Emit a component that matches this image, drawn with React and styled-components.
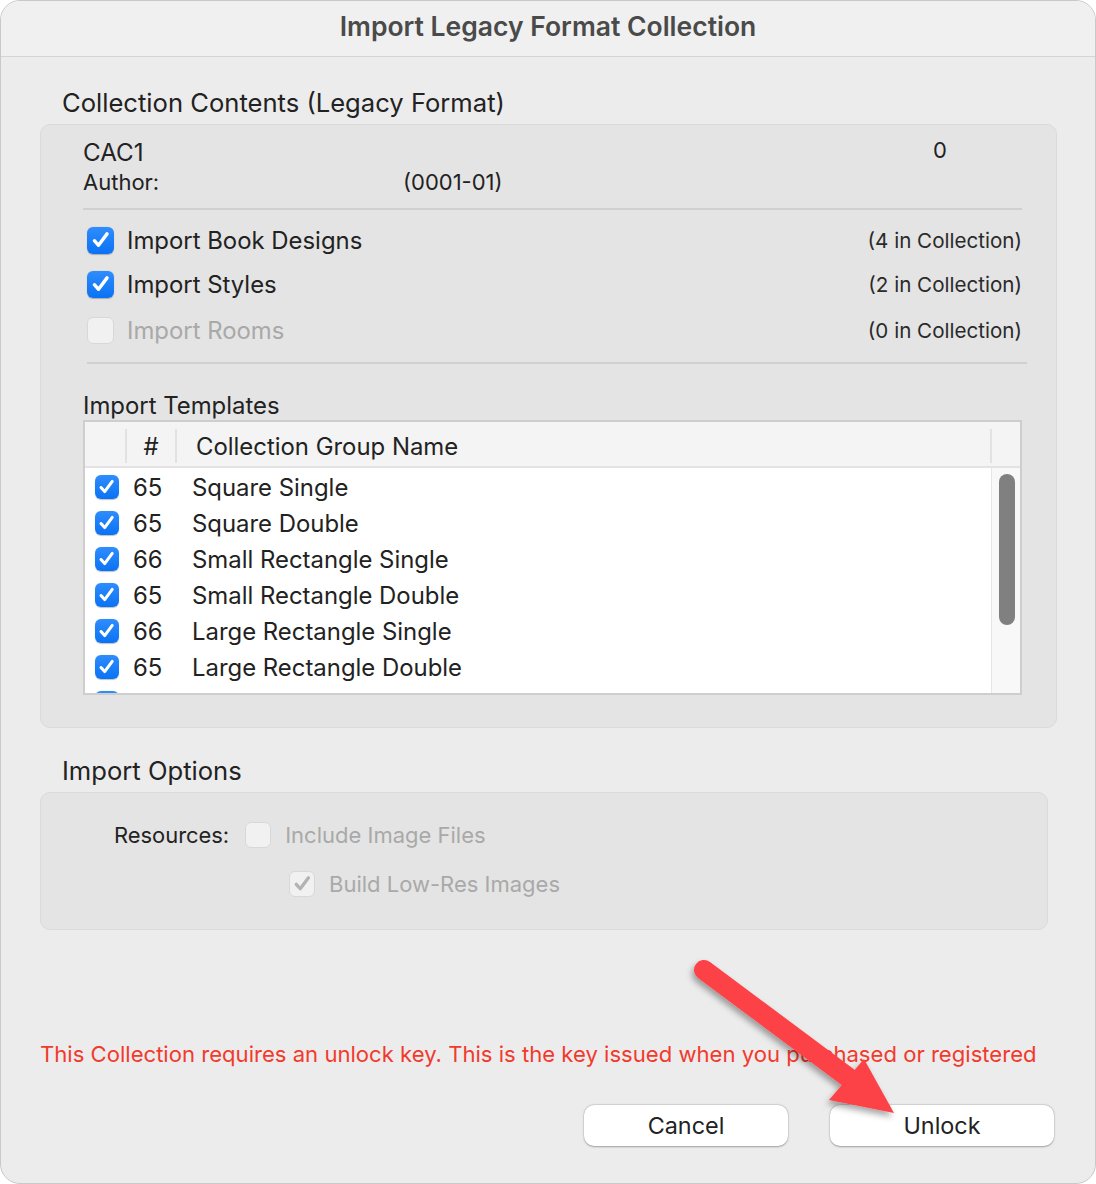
import React from "react";
import styled, { createGlobalStyle } from "styled-components";

const Global = createGlobalStyle`
  html, body { margin: 0; padding: 0; background: #ffffff; }
  body { font-family: Inter, "Noto Sans", sans-serif; -webkit-font-smoothing: antialiased; }
`;

const Window = styled.div`
  position: relative;
  width: 1096px;
  height: 1184px;
  box-sizing: border-box;
  border-radius: 20px;
  overflow: hidden;
  background: #ececec;
  border: 1px solid #c9c9c9;
  display: flex;
  flex-direction: column;
  color: #222;
`;

const TitleBar = styled.div`
  height: 56px;
  box-sizing: border-box;
  padding-bottom: 5px;
  flex: none;
  background: #f0f0f0;
  border-bottom: 1px solid #d4d4d4;
  display: flex;
  align-items: center;
  justify-content: center;
  font-size: 26.5px;
  font-weight: 600;
  color: #4a4a4a;
`;

const Body = styled.div`
  flex: 1;
  display: flex;
  flex-direction: column;
  padding: 0 40px 0 39px;
`;

const SectionLabel = styled.div`
  font-size: 25.6px;
  line-height: 30px;
  margin: ${(p) => p.$mt}px 0 6px 22px;
  color: #222;
`;

const Box = styled.div`
  box-sizing: border-box;
  width: ${(p) => p.$w}px;
  background: #e4e4e4;
  border: 1px solid #dadada;
  border-radius: 10px;
  padding: ${(p) => p.$pad};
`;

const InfoGrid = styled.div`
  display: grid;
  grid-template-columns: 320px 530px auto;
  align-items: center;
`;

const Name = styled.div`
  font-size: ${(p) => p.$fs || 24.2}px;
  line-height: 28px;
`;

const Small = styled.div`
  font-size: ${(p) => p.$fs || 22}px;
  line-height: 30px;
  margin-top: ${(p) => p.$mt || 0}px;
`;

const Divider = styled.div`
  height: 2px;
  background: #d0d0d0;
  margin: ${(p) => p.$m};
`;

const CheckRow = styled.div`
  display: flex;
  align-items: center;
  height: ${(p) => p.$h}px;
  padding-left: 4px;
`;

const CheckLabel = styled.span`
  font-size: 23.9px;
  margin-left: 13px;
  color: ${(p) => (p.$disabled ? "#a9a9a9" : "#222")};
  flex: 1;
`;

const Count = styled.span`
  font-size: 20.6px;
  color: #2a2a2a;
`;

const BoxEl = styled.span`
  box-sizing: border-box;
  flex: none;
  width: ${(p) => p.$size}px;
  height: ${(p) => p.$size}px;
  border-radius: 6px;
  display: inline-flex;
  align-items: center;
  justify-content: center;
  background: ${(p) =>
    p.$variant === "on"
      ? "linear-gradient(#2f8dfd, #0a72f4)"
      : "#f1f1f1"};
  border: ${(p) => (p.$variant === "on" ? "none" : "1px solid #d8d8d8")};
  box-shadow: ${(p) => (p.$variant === "on" ? "0 0.5px 1px rgba(0,0,0,0.25)" : "none")};
`;

function Check({ variant = "on", size = 27 }) {
  return (
    <BoxEl $variant={variant} $size={size}>
      {variant !== "off" && (
        <svg width={size * 0.72} height={size * 0.72} viewBox="0 0 16 16">
          <path
            d="M2.8 8.8 L6.2 12.6 L13.2 3.2"
            fill="none"
            stroke={variant === "on" ? "#fff" : "#b3b3b3"}
            strokeWidth="2.8"
            strokeLinecap="round"
            strokeLinejoin="round"
          />
        </svg>
      )}
    </BoxEl>
  );
}

const TableWrap = styled.div`
  box-sizing: border-box;
  border: 2px solid #cecece;
  background: #fff;
  height: 275px;
  display: flex;
  flex-direction: column;
  overflow: hidden;
`;

const HeadRow = styled.div`
  display: grid;
  grid-template-columns: 40px 50px 1fr 30px;
  height: 46px;
  flex: none;
  box-sizing: border-box;
  padding-top: 4px;
  background: #f3f4f3;
  border-bottom: 2px solid #e3e3e3;
  align-items: center;
  font-size: 23.9px;
`;

const HeadCell = styled.div`
  height: 34px;
  display: flex;
  align-items: center;
  justify-content: ${(p) => (p.$center ? "center" : "flex-start")};
  padding-left: ${(p) => p.$pl || 0}px;
  border-left: ${(p) => (p.$sep ? "2px solid #e2e2e2" : "none")};
`;

const ListArea = styled.div`
  flex: 1;
  display: flex;
  overflow: hidden;
`;

const Rows = styled.div`
  flex: 1;
  padding-top: 1px;
`;

const Row = styled.div`
  display: grid;
  grid-template-columns: 40px 50px 1fr;
  height: 36px;
  align-items: center;
  font-size: 23.9px;
`;

const RowCheck = styled.div`
  padding-left: 10px;
  display: flex;
`;

const Num = styled.div`
  padding-left: 8px;
`;

const GroupName = styled.div`
  padding-left: 17px;
`;

const ScrollTrack = styled.div`
  width: 28px;
  flex: none;
  background: #f8f8f8;
  border-left: 1px solid #e6e6e6;
  position: relative;
`;

const Thumb = styled.div`
  position: absolute;
  left: 7px;
  top: 6px;
  width: 16px;
  height: 151px;
  border-radius: 8px;
  background: #808080;
`;

const OptRow = styled.div`
  display: flex;
  align-items: center;
  height: ${(p) => p.$h}px;
  padding-left: ${(p) => p.$pl}px;
`;

const OptLabel = styled.span`
  font-size: 21.9px;
  color: #222;
  margin-right: 16px;
`;

const OptText = styled.span`
  font-size: 22px;
  color: #a9a9a9;
  margin-left: 14px;
`;

const Warning = styled.div`
  margin-top: 111px;
  padding-left: 0;
  font-size: 22.1px;
  color: #f23a2c;
  white-space: nowrap;
`;

const Buttons = styled.div`
  display: flex;
  justify-content: flex-end;
  gap: 42px;
  margin-top: 38px;
  padding-right: 1px;
`;

const Button = styled.button`
  width: ${(p) => p.$w}px;
  height: 41px;
  border: none;
  border-radius: 10px;
  background: #fff;
  box-shadow: 0 0.5px 2px rgba(0, 0, 0, 0.3), 0 0 0 0.5px rgba(0, 0, 0, 0.08);
  font-family: inherit;
  font-size: 23.4px;
  color: #222;
`;

const ArrowSvg = styled.svg`
  position: absolute;
  left: 0;
  top: 0;
  pointer-events: none;
`;

const templates = [
  ["65", "Square Single"],
  ["65", "Square Double"],
  ["66", "Small Rectangle Single"],
  ["65", "Small Rectangle Double"],
  ["66", "Large Rectangle Single"],
  ["65", "Large Rectangle Double"],
  ["65", "Panorama Single"],
];

export default function App() {
  return (
    <>
      <Global />
      <Window>
        <TitleBar>Import Legacy Format Collection</TitleBar>
        <Body>
          <SectionLabel $mt={31}>Collection Contents (Legacy Format)</SectionLabel>
          <Box $w={1017} $pad="14px 34px 32px 42px">
            <InfoGrid>
              <Name>CAC1</Name>
              <span />
              <Small $mt={-6}>0</Small>
              <Small>Author:</Small>
              <Small>(0001-01)</Small>
              <span />
            </InfoGrid>
            <Divider $m="11px 0 8px 0" />
            <CheckRow $h={44}>
              <Check />
              <CheckLabel>Import Book Designs</CheckLabel>
              <Count>(4 in Collection)</Count>
            </CheckRow>
            <CheckRow $h={44}>
              <Check />
              <CheckLabel>Import Styles</CheckLabel>
              <Count>(2 in Collection)</Count>
            </CheckRow>
            <CheckRow $h={48}>
              <Check variant="off" />
              <CheckLabel $disabled>Import Rooms</CheckLabel>
              <Count>(0 in Collection)</Count>
            </CheckRow>
            <Divider $m="8px -5px 28px 4px" />
            <Name $fs={23.9}>Import Templates</Name>
            <TableWrap>
              <HeadRow>
                <HeadCell />
                <HeadCell $sep $center>#</HeadCell>
                <HeadCell $sep $pl={19}>Collection Group Name</HeadCell>
                <HeadCell $sep />
              </HeadRow>
              <ListArea>
                <Rows>
                  {templates.map(([n, name]) => (
                    <Row key={name}>
                      <RowCheck>
                        <Check size={24} />
                      </RowCheck>
                      <Num>{n}</Num>
                      <GroupName>{name}</GroupName>
                    </Row>
                  ))}
                </Rows>
                <ScrollTrack>
                  <Thumb />
                </ScrollTrack>
              </ListArea>
            </TableWrap>
          </Box>
          <SectionLabel $mt={28}>Import Options</SectionLabel>
          <Box $w={1008} $pad="18px 0 21px 0">
            <OptRow $h={48} $pl={73}>
              <OptLabel>Resources:</OptLabel>
              <Check variant="off" size={26} />
              <OptText>Include Image Files</OptText>
            </OptRow>
            <OptRow $h={49} $pl={248}>
              <Check variant="dim" size={26} />
              <OptText>Build Low-Res Images</OptText>
            </OptRow>
          </Box>
          <Warning>
            This Collection requires an unlock key. This is the key issued when you purchased or registered
          </Warning>
          <Buttons>
            <Button $w={204}>Cancel</Button>
            <Button $w={224}>Unlock</Button>
          </Buttons>
        </Body>
        <ArrowSvg width="1096" height="1184" viewBox="0 0 1096 1184">
          <defs>
            <filter id="sh" x="-20%" y="-20%" width="140%" height="140%">
              <feDropShadow dx="-2" dy="4" stdDeviation="3" floodColor="#000" floodOpacity="0.35" />
            </filter>
          </defs>
          <g filter="url(#sh)" fill="#fc4246">
            <line x1="703" y1="969" x2="852" y2="1080" stroke="#fc4246" strokeWidth="20" strokeLinecap="round" />
            <polygon points="828,1099 863,1058 893,1112" />
          </g>
        </ArrowSvg>
      </Window>
    </>
  );
}
